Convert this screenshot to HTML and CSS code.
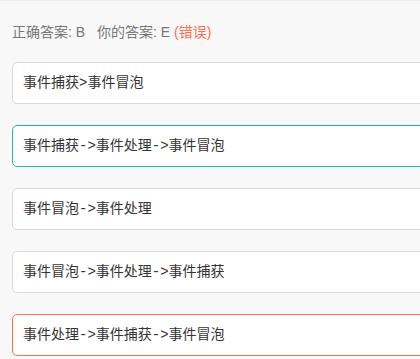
FILE: index.html
```html
<!DOCTYPE html>
<html lang="zh-CN">
<head>
    <meta charset="UTF-8">
    <title>答题结果</title>
    <link rel="stylesheet" href="styles.css">
</head>
<body>
    <div class="result">
        <div class="answer-line">
            <span>正确答案: B</span>
            <span class="mine">你的答案: E <span class="wrong">(错误)</span></span>
        </div>

        <ul class="options">
            <li class="option">事件捕获&gt;事件冒泡</li>
            <li class="option correct">事件捕获-&gt;事件处理-&gt;事件冒泡</li>
            <li class="option">事件冒泡-&gt;事件处理</li>
            <li class="option">事件冒泡-&gt;事件处理-&gt;事件捕获</li>
            <li class="option selected">事件处理-&gt;事件捕获-&gt;事件冒泡</li>
        </ul>
    </div>
</body>
</html>
```

FILE: styles.css
```css
body {
    margin: 0;
    background-color: #f8f8f8;
    border-top: 1px solid #ebebeb;
    font-family: "Liberation Sans", "Noto Sans CJK SC", sans-serif;
    overflow: hidden;
}

.result {
    padding: 19px 0 0 12px;
    overflow: hidden;
}

.answer-line {
    font-size: 14px;
    line-height: 24px;
    color: #777777;
    margin-bottom: 18px;
}

.answer-line .mine {
    margin-left: 8px;
}

.answer-line .wrong {
    color: #ff6e4f;
}

.options {
    list-style: none;
    margin: 0 -10px 0 0;
    padding: 0;
    display: flex;
    flex-direction: column;
    gap: 21px;
}

.option {
    box-sizing: border-box;
    height: 42px;
    line-height: 40px;
    padding: 0 10px;
    background-color: #ffffff;
    border: 1px solid #d9d9d9;
    border-radius: 5px;
    font-family: "Liberation Mono", "Noto Sans CJK SC", monospace;
    font-size: 14px;
    color: #333333;
}

.option.correct {
    border-color: #1dbf9b;
}

.option.selected {
    border-color: #ff6e4f;
}
```
